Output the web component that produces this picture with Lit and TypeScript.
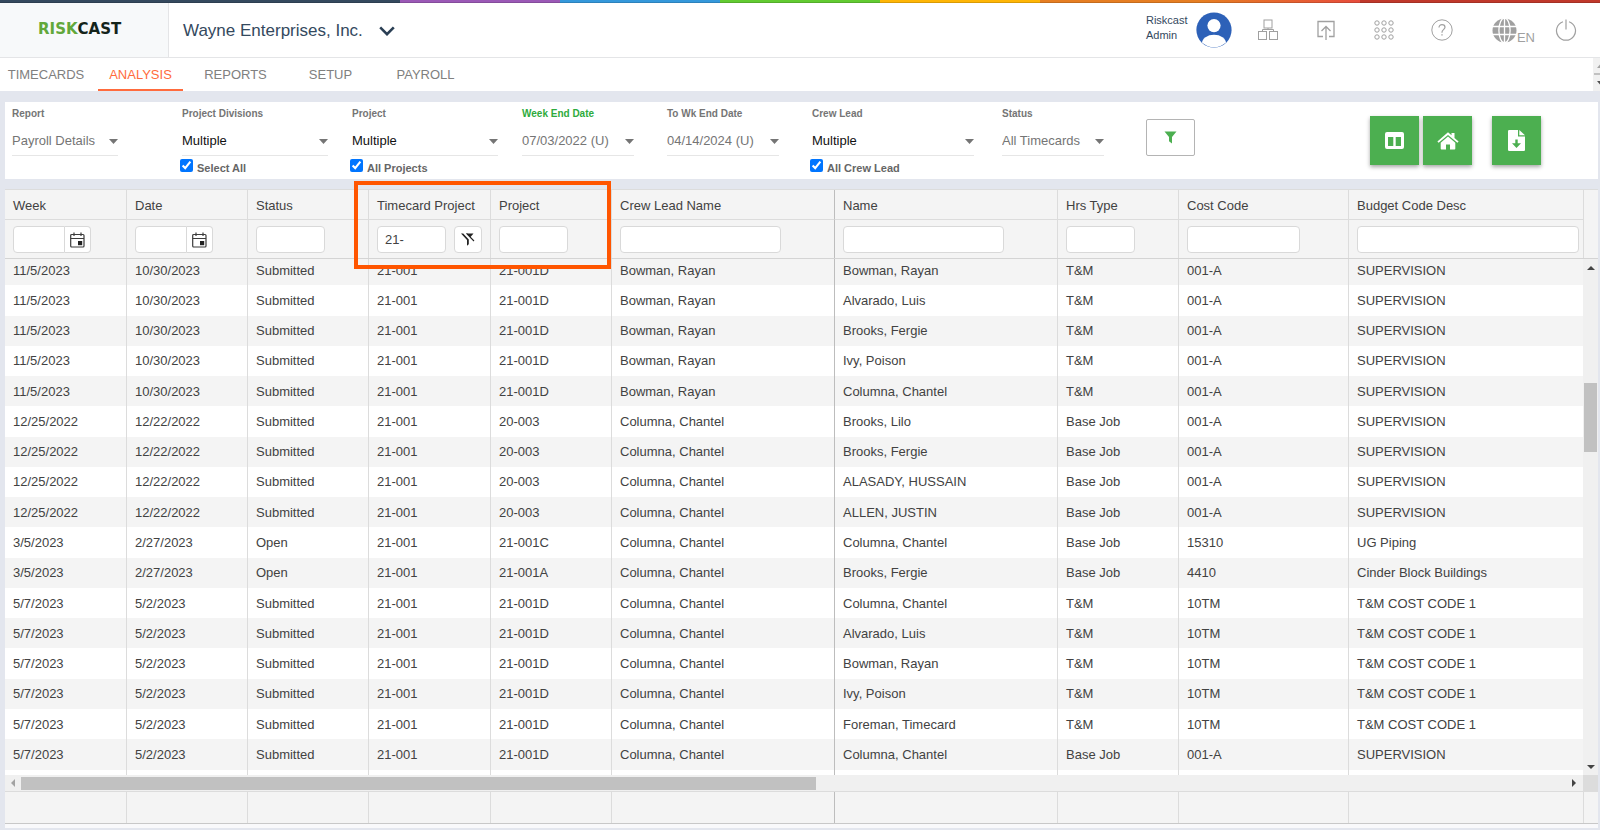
import { LitElement, html, css, svg, nothing } from "lit";
import { customElement, property } from "lit/decorators.js";
import { classMap } from "lit/directives/class-map.js";

type Column = {
  title: string;
  width: string;
  field: "date" | "short" | "medium" | "long" | "full";
  value?: string;
  clearable?: boolean;
  strong?: boolean;
};

const COLUMNS: Column[] = [
  { title: "Week", width: "122px", field: "date" },
  { title: "Date", width: "121px", field: "date" },
  { title: "Status", width: "121px", field: "short" },
  { title: "Timecard Project", width: "122px", field: "short", value: "21-", clearable: true },
  { title: "Project", width: "121px", field: "short" },
  { title: "Crew Lead Name", width: "223px", field: "long", strong: true },
  { title: "Name", width: "223px", field: "long" },
  { title: "Hrs Type", width: "121px", field: "short" },
  { title: "Cost Code", width: "170px", field: "medium" },
  { title: "Budget Code Desc", width: "auto", field: "full" },
];

const BOWMAN = ["11/5/2023", "10/30/2023", "Submitted", "21-001", "21-001D", "Bowman, Rayan"];
const DECEMBER = ["12/25/2022", "12/22/2022", "Submitted", "21-001", "20-003", "Columna, Chantel"];
const MAY = ["5/7/2023", "5/2/2023", "Submitted", "21-001", "21-001D", "Columna, Chantel"];
const TM = ["T&M", "001-A", "SUPERVISION"];
const BASE = ["Base Job", "001-A", "SUPERVISION"];
const TM_CODE = ["T&M", "10TM", "T&M COST CODE 1"];

const ROWS: string[][] = [
  [...BOWMAN, "Bowman, Rayan", ...TM],
  [...BOWMAN, "Alvarado, Luis", ...TM],
  [...BOWMAN, "Brooks, Fergie", ...TM],
  [...BOWMAN, "Ivy, Poison", ...TM],
  [...BOWMAN, "Columna, Chantel", ...TM],
  [...DECEMBER, "Brooks, Lilo", ...BASE],
  [...DECEMBER, "Brooks, Fergie", ...BASE],
  [...DECEMBER, "ALASADY, HUSSAIN", ...BASE],
  [...DECEMBER, "ALLEN, JUSTIN", ...BASE],
  ["3/5/2023", "2/27/2023", "Open", "21-001", "21-001C", "Columna, Chantel", "Columna, Chantel", "Base Job", "15310", "UG Piping"],
  ["3/5/2023", "2/27/2023", "Open", "21-001", "21-001A", "Columna, Chantel", "Brooks, Fergie", "Base Job", "4410", "Cinder Block Buildings"],
  [...MAY, "Columna, Chantel", ...TM_CODE],
  [...MAY, "Alvarado, Luis", ...TM_CODE],
  [...MAY, "Bowman, Rayan", ...TM_CODE],
  [...MAY, "Ivy, Poison", ...TM_CODE],
  [...MAY, "Foreman, Timecard", ...TM_CODE],
  [...MAY, "Columna, Chantel", ...BASE],
  ["", "", "", "", "", "", "", "", "", ""],
];

const colgroup = () => html`<colgroup>
  ${COLUMNS.map((c) => html`<col style="width:${c.width}" />`)}
</colgroup>`;

const reset = css`
  * {
    box-sizing: border-box;
  }
  button,
  input,
  select {
    font: inherit;
    color: inherit;
    margin: 0;
  }
  button {
    padding: 0;
    border: 0;
    background: none;
    cursor: pointer;
  }
  svg {
    display: block;
  }
`;

@customElement("rc-header")
export class RcHeader extends LitElement {
  static styles = [
    reset,
    css`
      :host {
        display: block;
      }
      .stripe {
        height: 3px;
        background:
          linear-gradient(rgba(0, 0, 0, 0) 2px, rgba(0, 0, 0, 0.15) 2px),
          linear-gradient(
            to right,
            #34495e 25%,
            #9b59b6 25% 35%,
            #3498db 35% 45%,
            #62cb31 45% 55%,
            #ffb606 55% 65%,
            #e67e22 65% 75%,
            #e74c3c 85%,
            #c0392b 85%
          );
      }
      .bar {
        display: flex;
        align-items: stretch;
        height: 55px;
        border-bottom: 1px solid #e4e5e7;
        background: #fff;
      }
      .brand {
        width: 169px;
        display: flex;
        align-items: center;
        padding: 0 0 2px 38px;
        background: #f7f9fa;
        border-right: 1px solid #e4e5e7;
        font: bold 15px "DejaVu Sans", sans-serif;
        color: #14241a;
      }
      .brand b {
        color: #62a83a;
      }
      .company {
        display: flex;
        align-items: center;
        gap: 16px;
        padding: 2px 14px 0;
        font-size: 17px;
        color: #34495e;
      }
      .tools {
        margin-left: auto;
        display: flex;
        align-items: center;
        padding-right: 22px;
        color: #a0a0a0;
      }
      .user {
        width: 50px;
        font-size: 11px;
        line-height: 15px;
        color: #34495e;
        padding-bottom: 4px;
      }
      .avatar {
        margin-right: 24px;
      }
      .tool {
        width: 24px;
        height: 24px;
        margin-right: 34px;
        display: grid;
        place-items: center;
      }
      .lang {
        display: flex;
        align-items: center;
        font-size: 13px;
        line-height: 13px;
        margin: 0 19px 0 4px;
      }
      .lang span {
        padding-top: 14px;
      }
      .tool.last {
        margin: 0;
      }
    `,
  ];

  render() {
    return html`
      <div class="stripe"></div>
      <header class="bar">
        <div class="brand"><span><b>RISK</b>CAST</span></div>
        <button class="company">
          Wayne Enterprises, Inc.
          <svg width="16" height="10" viewBox="0 0 16 10" fill="none" stroke="#2a3f54" stroke-width="2.6">
            <path d="M1.2 1.4 8 8.2 14.8 1.4" />
          </svg>
        </button>
        <div class="tools">
          <div class="user">Riskcast<br />Admin</div>
          <button class="avatar" aria-label="Profile">
            <svg width="36" height="36" viewBox="0 0 36 36">
              <clipPath id="c"><circle cx="18" cy="18" r="17.2" /></clipPath>
              <circle cx="18" cy="18" r="17.6" fill="#2d61b8" />
              <circle cx="18" cy="13.6" r="6.6" fill="#fff" />
              <ellipse cx="18" cy="31" rx="12" ry="8.2" fill="#fff" clip-path="url(#c)" />
            </svg>
          </button>
          <button class="tool" aria-label="Organization">
            <svg width="22" height="22" viewBox="0 0 22 22" fill="none" stroke="currentColor">
              <rect x="7" y="1" width="8" height="8" />
              <rect x="1.5" y="12.5" width="8" height="8" />
              <rect x="12.5" y="12.5" width="8" height="8" />
              <path d="M11 9v2M5.500 12.500V10.500H16.500V12.500" />
            </svg>
          </button>
          <button class="tool" aria-label="Upload">
            <svg width="20" height="22" viewBox="0 0 20 22" fill="none" stroke="currentColor" stroke-width="1.3">
              <path d="M7 17.500H2V2.500H18V17.500H13M10 21V8M5.500 12 10 7.500 14.500 12" />
            </svg>
          </button>
          <button class="tool" aria-label="Apps">
            <svg width="20" height="20" viewBox="0 0 20 20" fill="none" stroke="currentColor">
              ${[3, 10, 17].map((y) => [3, 10, 17].map((x) => svg`<circle cx=${x} cy=${y} r="2.2" />`))}
            </svg>
          </button>
          <button class="tool" aria-label="Help">
            <svg width="22" height="22" viewBox="0 0 22 22" fill="none" stroke="currentColor">
              <circle cx="11" cy="11" r="10.200" />
              <path d="M8 8.600C8 6.600 9.300 5.600 11 5.600s3 1 3 2.700c0 2.200-3 2.500-3 4.900v.6" stroke-width="1.200" />
              <path d="M11 15.200v1.400" stroke-width="1.400" />
            </svg>
          </button>
          <button class="lang" aria-label="Language">
            <svg width="25" height="25" viewBox="0 0 25 25">
              <circle cx="12.500" cy="12.500" r="12" fill="currentColor" />
              <g fill="none" stroke="#fff" stroke-width="1.300">
                <ellipse cx="12.500" cy="12.500" rx="5.600" ry="12.400" />
                <path d="M12.500 0V25M0 8.500H25M0 16.500H25" />
              </g>
            </svg>
            <span>EN</span>
          </button>
          <button class="tool last" aria-label="Log out">
            <svg width="22" height="22" viewBox="0 0 22 22" fill="none" stroke="currentColor" stroke-width="1.200">
              <path d="M8 2.700a9.500 9.500 0 1 0 6 0M11 .500V10.500" />
            </svg>
          </button>
        </div>
      </header>
    `;
  }
}

@customElement("rc-tabs")
export class RcTabs extends LitElement {
  static styles = [
    reset,
    css`
      :host {
        display: flex;
        justify-content: space-between;
        height: 33px;
        background: #fff;
      }
      nav {
        display: flex;
      }
      a {
        display: flex;
        align-items: center;
        justify-content: center;
        width: 95px;
        padding-top: 2px;
        border-bottom: 2px solid transparent;
        color: #808080;
        text-decoration: none;
        font-size: 13px;
      }
      a:first-child {
        width: 98px;
        padding-right: 6px;
      }
      a.on {
        width: 85px;
        margin-right: 5px;
        color: #ff6b3d;
        border-color: #ff6b3d;
      }
      .scroll {
        width: 7px;
        overflow: hidden;
        background: #f1f1f1;
      }
    `,
  ];

  render() {
    return html`
      <nav>
        <a href="#timecards">TIMECARDS</a>
        <a href="#analysis" class="on">ANALYSIS</a>
        <a href="#reports">REPORTS</a>
        <a href="#setup">SETUP</a>
        <a href="#payroll">PAYROLL</a>
      </nav>
      <div class="scroll">
        <svg width="14" height="33" viewBox="0 0 14 33">
          <path d="M4 10 7.500 6 11 10z" fill="#a3a3a3" />
          <path d="M1 15H14V17H1z" fill="#c1c1c1" />
          <path d="M4 23 7.500 27 11 23z" fill="#505050" />
        </svg>
      </div>
    `;
  }
}

type Filter = { id: string; label: string; value: string; kind: string; check?: string };

const FILTERS: Filter[] = [
  { id: "report", label: "Report", value: "Payroll Details", kind: "report" },
  { id: "divisions", label: "Project Divisions", value: "Multiple", kind: "multi", check: "Select All" },
  { id: "project", label: "Project", value: "Multiple", kind: "multi", check: "All Projects" },
  { id: "from", label: "Week End Date", value: "07/03/2022 (U)", kind: "date from" },
  { id: "to", label: "To Wk End Date", value: "04/14/2024 (U)", kind: "date" },
  { id: "lead", label: "Crew Lead", value: "Multiple", kind: "multi lead", check: "All Crew Lead" },
  { id: "status", label: "Status", value: "All Timecards", kind: "status" },
];

@customElement("rc-filters")
export class RcFilters extends LitElement {
  static styles = [
    reset,
    css`
      :host {
        display: flex;
        align-items: flex-start;
        height: 77px;
        padding-left: 7px;
        background: #fff;
      }
      .field {
        color: #757575;
      }
      .report {
        width: 170px;
        padding-right: 64px;
      }
      .multi {
        width: 170px;
        padding-right: 24px;
      }
      .date {
        width: 145px;
        padding-right: 33px;
      }
      .multi.lead {
        width: 190px;
        padding-right: 28px;
      }
      .status {
        width: 144px;
        padding-right: 42px;
      }
      .name {
        display: block;
        padding-top: 6px;
        font-size: 10px;
        font-weight: bold;
        line-height: 12px;
        white-space: nowrap;
      }
      .from .name {
        color: #2eab3c;
      }
      .box {
        display: grid;
        grid-template-columns: 1fr auto;
        align-items: center;
        height: 28px;
        margin-top: 8px;
        border-bottom: 1px solid #e6e6e6;
      }
      .box > * {
        grid-row: 1;
      }
      select {
        grid-column: 1 / 3;
        width: 100%;
        min-width: 0;
        height: 27px;
        border: 0;
        padding: 0 0 2px;
        background: none;
        appearance: none;
        font-size: 13px;
      }
      .multi select {
        color: #111;
      }
      .box svg {
        grid-column: 2;
        pointer-events: none;
      }
      .check {
        display: flex;
        align-items: flex-start;
        gap: 4px;
        margin: 3px 0 0 -2px;
        font-size: 11px;
        font-weight: bold;
        line-height: 13px;
        color: #666;
      }
      .check span {
        padding-top: 3px;
      }
      .check input {
        width: 13px;
        height: 13px;
      }
      .apply {
        display: grid;
        place-items: center;
        width: 49px;
        height: 37px;
        margin-top: 17px;
        border: 1px solid #b4b4b4;
        border-radius: 2px;
      }
      .actions {
        margin: 14px 57px 0 auto;
        display: flex;
        gap: 4px;
      }
      .actions button {
        display: grid;
        place-items: center;
        width: 49px;
        height: 49px;
        background: #4caf50;
        box-shadow: 0 2px 4px rgba(0, 0, 0, 0.35);
      }
      .actions .export {
        margin-left: 16px;
      }
    `,
  ];

  render() {
    return html`
      ${FILTERS.map(
        (f) => html`<div class="field ${f.kind}">
          <label class="name" for=${f.id}>${f.label}</label>
          <div class="box">
            <select id=${f.id}>
              <option>${f.value}</option>
            </select>
            <svg width="9" height="5" viewBox="0 0 9 5"><path d="M0 0H9L4.500 5z" fill="#757575" /></svg>
          </div>
          ${f.check
            ? html`<label class="check"><input type="checkbox" checked /><span>${f.check}</span></label>`
            : nothing}
        </div>`
      )}
      <button class="apply" aria-label="Apply filter">
        <svg width="13" height="13" viewBox="0 0 13 13"><path d="M.500.500H12.500L8 6V12.500L5 10.300V6z" fill="#4caf50" /></svg>
      </button>
      <div class="actions">
        <button aria-label="Columns">
          <svg width="19" height="17" viewBox="0 0 19 17">
            <path
              fill="#fff"
              fill-rule="evenodd"
              d="M2 0H17a2 2 0 0 1 2 2V15a2 2 0 0 1-2 2H2a2 2 0 0 1-2-2V2A2 2 0 0 1 2 0zM3 5V14H8.300V5zM10.700 5V14H16V5z"
            />
          </svg>
        </button>
        <button aria-label="Home">
          <svg width="22" height="18" viewBox="0 0 22 18" fill="#fff">
            <path d="M11 .3 14.500 3.300V1H17.500V5.900L21.600 9.400 20.400 10.800 11 2.900 1.600 10.800.4 9.400z" />
            <path d="M11 4.600 18.300 10.800V16.800a.8.8 0 0 1-.8.8H13V12.600H9V17.600H4.500a.8.8 0 0 1-.8-.8V10.800z" />
          </svg>
        </button>
        <button class="export" aria-label="Export">
          <svg width="17" height="21" viewBox="0 0 17 21">
            <path fill="#fff" d="M1.500 0H10V6.500H17V19.500A1.300 1.300 0 0 1 15.700 21H1.300A1.300 1.300 0 0 1 0 19.700V1.300A1.300 1.300 0 0 1 1.500 0zM11.300 0 17 5.300H11.300z" />
            <path fill="#4caf50" d="M7.300 9.500H9.700V13.300H13L8.500 18 4 13.300H7.300z" />
          </svg>
        </button>
      </div>
    `;
  }
}

@customElement("rc-grid")
export class RcGrid extends LitElement {
  @property({ attribute: false }) rows: string[][] = [];

  static styles = [
    reset,
    css`
      :host {
        position: relative;
        display: flex;
        flex-direction: column;
        background: #f4f4f4;
        border-top: 1px solid #dcdcdc;
        font-size: 13px;
        color: #424242;
      }
      table {
        width: 100%;
        table-layout: fixed;
        border-collapse: separate;
        border-spacing: 0;
      }
      th,
      td {
        padding: 0 0 0 8px;
        text-align: left;
        font-weight: normal;
        white-space: nowrap;
        border-right: 1px solid #dcdcdc;
      }
      .strong {
        border-right-color: #bdbdbd;
      }
      .head,
      .foot {
        padding-right: 14px;
        border-bottom: 1px solid #d4d4d4;
      }
      .head th {
        height: 30px;
        padding-top: 2px;
        border-bottom: 1px solid #dcdcdc;
      }
      .head td {
        height: 38px;
        padding-top: 1px;
        padding-right: 4px;
      }
      .line {
        display: flex;
        gap: 8px;
      }
      .line input {
        width: 69px;
        height: 27px;
        padding: 0 7px;
        border: 1px solid #d9d9d9;
        border-radius: 4px;
        background: #fff;
      }
      .line .medium {
        width: 113px;
      }
      .line .long {
        width: 161px;
      }
      .line .full {
        width: 100%;
      }
      .line.picker {
        gap: 0;
      }
      .picker input {
        width: 52px;
        border-radius: 4px 0 0 4px;
      }
      .picker button,
      .clear {
        display: grid;
        place-items: center;
        height: 27px;
        border: 1px solid #d9d9d9;
        background: #fff;
      }
      .picker button {
        width: 26px;
        border-left: 0;
        border-radius: 0 4px 4px 0;
      }
      .clear {
        width: 28px;
        border-radius: 4px;
      }
      .middle {
        flex: 1;
        min-height: 0;
        display: grid;
        grid-template-columns: 1fr 15px;
        grid-template-rows: 1fr 16px;
      }
      .view {
        overflow: hidden;
        background: #fff;
      }
      /* The list rests a few pixels into its first row. */
      .view table {
        height: 545px;
        margin-top: -4px;
      }
      .view td {
        height: 30px;
      }
      .view td:last-child {
        border-right: 0;
      }
      .view tr:nth-child(odd) {
        background: #f4f4f4;
      }
      .vbar,
      .hbar {
        display: flex;
        align-items: center;
        background: #f0f0f0;
      }
      .vbar {
        flex-direction: column;
        padding: 7px 0 6px;
      }
      .vrail {
        flex: 1;
        width: 13px;
        display: grid;
        grid-template-rows: 113fr 69fr 313fr;
        min-height: 0;
      }
      .hbar {
        padding: 0 7px 0 6px;
      }
      .hrail {
        flex: 1;
        height: 13px;
        margin: 0 6px;
        display: grid;
        grid-template-columns: 795fr 750fr;
      }
      .thumb {
        background: #c1c1c1;
      }
      .vrail .thumb {
        grid-row: 2;
      }
      .corner {
        background: #dcdcdc;
      }
      .foot {
        border-top: 1px solid #dcdcdc;
        border-bottom-color: #c8c8c8;
      }
      .foot td {
        height: 31px;
      }
      .mark {
        position: absolute;
        left: 349px;
        top: -9px;
        width: 257px;
        height: 88px;
        border: 4px solid #ff5500;
        pointer-events: none;
      }
    `,
  ];

  private filterCell(c: Column) {
    if (c.field === "date") {
      return html`<div class="line picker">
        <input type="text" aria-label=${c.title} />
        <button aria-label="Open calendar">
          <svg width="15" height="16" viewBox="0 0 15 16" fill="none" stroke="#3c3c3c" stroke-width="1.200">
            <rect x=".7" y="2.500" width="13.300" height="12.500" rx="1" />
            <path d="M.7 6.500H14M4 .500V4M11 .500V4" />
            <rect x="8.600" y="9.600" width="3" height="3" fill="#222" stroke="#222" />
          </svg>
        </button>
      </div>`;
    }
    return html`<div class="line">
      <input type="text" class=${c.field} .value=${c.value ?? ""} aria-label=${c.title} />
      ${c.clearable
        ? html`<button class="clear" aria-label="Clear filter">
            <svg width="16" height="15" viewBox="0 0 16 15">
              <path d="M1 1.500 7 8V13.800L8.800 12.300V7.500L3.200 1.500z" fill="#222" />
              <path d="M6.500 1.500H13.500L10.300 5.300z" fill="#222" />
              <path d="M6.500 1.300 14 9" stroke="#222" stroke-width="1.100" />
            </svg>
          </button>`
        : nothing}
    </div>`;
  }

  render() {
    const strong = (i: number) => classMap({ strong: !!COLUMNS[i].strong });
    return html`
      <div class="head">
        <table>
          ${colgroup()}
          <thead>
            <tr>${COLUMNS.map((c, i) => html`<th scope="col" class=${strong(i)}>${c.title}</th>`)}</tr>
            <tr>${COLUMNS.map((c, i) => html`<td class=${strong(i)}>${this.filterCell(c)}</td>`)}</tr>
          </thead>
        </table>
      </div>
      <div class="middle">
        <div class="view">
          <table>
            ${colgroup()}
            <tbody>
              ${this.rows.map((r) => html`<tr>${r.map((v, i) => html`<td class=${strong(i)}>${v}</td>`)}</tr>`)}
            </tbody>
          </table>
        </div>
        <div class="vbar">
          <svg width="8" height="4" viewBox="0 0 8 4"><path d="M0 4 4 0 8 4z" fill="#444" /></svg>
          <div class="vrail"><div class="thumb"></div></div>
          <svg width="8" height="4" viewBox="0 0 8 4"><path d="M0 0 4 4 8 0z" fill="#444" /></svg>
        </div>
        <div class="hbar">
          <svg width="4" height="8" viewBox="0 0 4 8"><path d="M4 0 0 4 4 8z" fill="#a3a3a3" /></svg>
          <div class="hrail"><div class="thumb"></div></div>
          <svg width="4" height="8" viewBox="0 0 4 8"><path d="M0 0 4 4 0 8z" fill="#444" /></svg>
        </div>
        <div class="corner"></div>
      </div>
      <div class="foot">
        <table>
          ${colgroup()}
          <tfoot>
            <tr>${COLUMNS.map((_, i) => html`<td class=${strong(i)}></td>`)}</tr>
          </tfoot>
        </table>
      </div>
      <div class="mark"></div>
    `;
  }
}

@customElement("app-root")
export class AppRoot extends LitElement {
  static styles = css`
    :host {
      display: flex;
      flex-direction: column;
      height: 100vh;
      background: #e3e6ee;
      font-family: "Liberation Sans", Arial, sans-serif;
    }
    main {
      flex: 1;
      min-height: 0;
      display: flex;
      flex-direction: column;
      gap: 10px;
      padding: 11px 2px 2px 5px;
    }
    .sheet {
      flex: 1;
      min-height: 0;
      display: flex;
      flex-direction: column;
      padding-bottom: 4px;
      background: #f9f9fb;
    }
    rc-grid {
      flex: 1;
      min-height: 0;
    }
  `;

  render() {
    return html`
      <rc-header></rc-header>
      <rc-tabs></rc-tabs>
      <main>
        <rc-filters></rc-filters>
        <div class="sheet"><rc-grid .rows=${ROWS}></rc-grid></div>
      </main>
    `;
  }
}
